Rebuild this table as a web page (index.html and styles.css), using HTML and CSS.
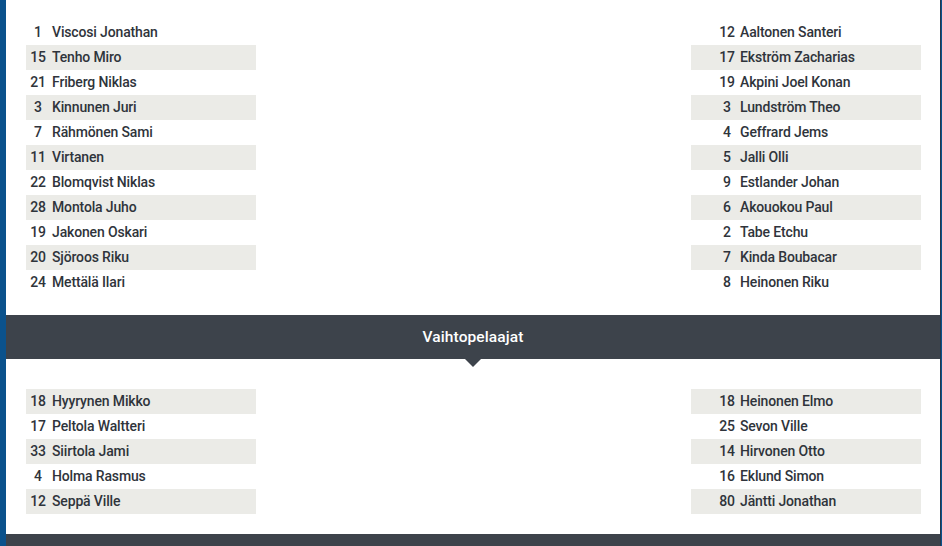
FILE: index.html
```html
<!DOCTYPE html>
<html lang="fi">
<head>
<meta charset="utf-8">
<title>Kokoonpanot</title>
<link rel="stylesheet" href="styles.css">
</head>
<body>
<div class="frame">
  <div class="edge edge-left"></div>
  <main class="main">
    <section class="lineup lineup-start">
      <ul class="team team-home">
        <li class="player"><span class="num">1</span><span class="name">Viscosi Jonathan</span></li>
        <li class="player"><span class="num">15</span><span class="name">Tenho Miro</span></li>
        <li class="player"><span class="num">21</span><span class="name">Friberg Niklas</span></li>
        <li class="player"><span class="num">3</span><span class="name">Kinnunen Juri</span></li>
        <li class="player"><span class="num">7</span><span class="name">Rähmönen Sami</span></li>
        <li class="player"><span class="num">11</span><span class="name">Virtanen</span></li>
        <li class="player"><span class="num">22</span><span class="name">Blomqvist Niklas</span></li>
        <li class="player"><span class="num">28</span><span class="name">Montola Juho</span></li>
        <li class="player"><span class="num">19</span><span class="name">Jakonen Oskari</span></li>
        <li class="player"><span class="num">20</span><span class="name">Sjöroos Riku</span></li>
        <li class="player"><span class="num">24</span><span class="name">Mettälä Ilari</span></li>
      </ul>
      <ul class="team team-away">
        <li class="player"><span class="num">12</span><span class="name">Aaltonen Santeri</span></li>
        <li class="player"><span class="num">17</span><span class="name">Ekström Zacharias</span></li>
        <li class="player"><span class="num">19</span><span class="name">Akpini Joel Konan</span></li>
        <li class="player"><span class="num">3</span><span class="name">Lundström Theo</span></li>
        <li class="player"><span class="num">4</span><span class="name">Geffrard Jems</span></li>
        <li class="player"><span class="num">5</span><span class="name">Jalli Olli</span></li>
        <li class="player"><span class="num">9</span><span class="name">Estlander Johan</span></li>
        <li class="player"><span class="num">6</span><span class="name">Akouokou Paul</span></li>
        <li class="player"><span class="num">2</span><span class="name">Tabe Etchu</span></li>
        <li class="player"><span class="num">7</span><span class="name">Kinda Boubacar</span></li>
        <li class="player"><span class="num">8</span><span class="name">Heinonen Riku</span></li>
      </ul>
    </section>
    <h2 class="bar">Vaihtopelaajat</h2>
    <section class="lineup lineup-subs">
      <ul class="team team-home subs">
        <li class="player"><span class="num">18</span><span class="name">Hyyrynen Mikko</span></li>
        <li class="player"><span class="num">17</span><span class="name">Peltola Waltteri</span></li>
        <li class="player"><span class="num">33</span><span class="name">Siirtola Jami</span></li>
        <li class="player"><span class="num">4</span><span class="name">Holma Rasmus</span></li>
        <li class="player"><span class="num">12</span><span class="name">Seppä Ville</span></li>
      </ul>
      <ul class="team team-away subs">
        <li class="player"><span class="num">18</span><span class="name">Heinonen Elmo</span></li>
        <li class="player"><span class="num">25</span><span class="name">Sevon Ville</span></li>
        <li class="player"><span class="num">14</span><span class="name">Hirvonen Otto</span></li>
        <li class="player"><span class="num">16</span><span class="name">Eklund Simon</span></li>
        <li class="player"><span class="num">80</span><span class="name">Jäntti Jonathan</span></li>
      </ul>
    </section>
    <div class="footer-bar"></div>
  </main>
  <div class="edge edge-right"></div>
</div>
</body>
</html>
```

FILE: styles.css
```css
* { box-sizing: border-box; }

html, body {
  margin: 0;
  padding: 0;
  background: #ffffff;
  height: 100%;
  overflow: hidden;
}

body {
  font-family: Roboto, "Noto Sans", Arial, sans-serif;
  color: #2f343b;
}

.frame {
  display: flex;
  width: 942px;
  height: 546px;
}

.edge {
  flex: none;
  background: #0b528c;
}

.edge-left { width: 6px; }

.edge-right {
  width: 2px;
  border-left: 1px solid #24384c;
}

.main {
  flex: 1;
  display: flex;
  flex-direction: column;
  min-width: 0;
}

.lineup {
  display: flex;
  justify-content: space-between;
  padding: 20px 19px 20px 20px;
}

.lineup-subs { padding-top: 30px; }

.team {
  list-style: none;
  margin: 0;
  padding: 0;
  width: 230px;
}

.player {
  display: flex;
  align-items: center;
  height: 25px;
  padding-bottom: 2px;
  font-size: 14px;
  font-weight: 500;
  letter-spacing: -0.15px;
}

.team .player:nth-child(even) { background: #ebebe7; }
.team.subs .player:nth-child(odd) { background: #ebebe7; }
.team.subs .player:nth-child(even) { background: transparent; }

.team-away .player { padding-left: 24px; }

.num {
  width: 24px;
  text-align: center;
  flex: none;
}

.name {
  margin-left: 2px;
}

.team-away .name { margin-left: 1px; }

.bar {
  position: relative;
  margin: 0;
  height: 44px;
  padding-bottom: 1px;
  display: flex;
  align-items: center;
  justify-content: center;
  background: #3d434b;
  color: #ffffff;
  font-size: 15.5px;
  font-weight: 500;
  letter-spacing: 0.1px;
}

.bar::after {
  content: "";
  position: absolute;
  left: 459px;
  top: 44px;
  border-left: 8px solid transparent;
  border-right: 8px solid transparent;
  border-top: 8px solid #3d434b;
}

.footer-bar {
  flex: 1;
  background: #3d434b;
}
```
